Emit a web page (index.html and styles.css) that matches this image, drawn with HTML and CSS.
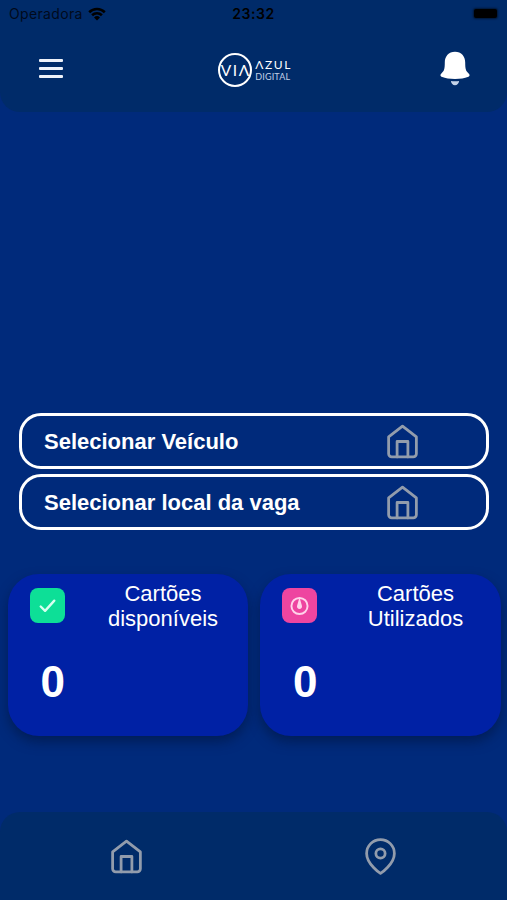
FILE: index.html
```
<!DOCTYPE html>
<html lang="pt-BR">
<head>
  <meta charset="UTF-8" />
  <meta name="viewport" content="width=device-width, initial-scale=1.0"/>
  <title>Via Azul Digital</title>
  <link rel="stylesheet" href="styles.css">
</head>
<body>

  <header class="header">
    <!-- Status bar -->
    <div class="status-bar">
      <div class="carrier">
        <span>Operadora</span>
        <svg class="wifi" viewBox="0 0 18 14">
          <path d="M1.2 5.2a11.2 11.2 0 0 1 15.6 0M4.1 8.3a7 7 0 0 1 9.8 0" fill="none" stroke="#000" stroke-width="2.6"/>
          <path d="M9 13.6L6 10.5a4.3 4.3 0 0 1 6 0z" fill="#000"/>
        </svg>
      </div>
      <div class="clock">23:32</div>
      <div class="battery"></div>
    </div>

    <!-- Menu, logo, notifications -->
    <div class="nav">
      <button class="nav-btn menu-btn" aria-label="Menu">
        <span></span><span></span><span></span>
      </button>
      <div class="logo">
        <div class="logo-circle">VIΛ</div>
        <div class="logo-text">
          <span class="logo-azul">ΛZUL</span>
          <span class="logo-digital">DIGITAL</span>
        </div>
      </div>
      <button class="nav-btn bell-btn" aria-label="Notificações">
        <svg class="bell" viewBox="0 0 30 35">
          <path d="M15 .8c6.4 0 10.2 4.7 10.2 10.8 0 6.8.8 8.6 3.2 10.6 2 1.8 1.2 3.2-.6 3.9-3 1.2-7.4 1.9-12.8 1.9s-9.8-.7-12.8-1.9c-1.8-.7-2.6-2.1-.6-3.9 2.4-2 3.2-3.8 3.2-10.6C4.8 5.5 8.6.8 15 .8z" fill="#fff"/>
          <path d="M10.9 30q4.1.6 8.2 0c-.3 2.6-1.9 4.2-4.1 4.200s-3.800-1.600-4.100-4.200z" fill="#c5d3e8"/>
        </svg>
      </button>
    </div>
  </header>

  <main class="content">
    <div class="selects">
      <div class="select-box">
        <span>Selecionar Veículo</span>
        <svg class="icon" viewBox="0 0 24 24">
          <path d="M3 9l9-7 9 7v11a2 2 0 0 1-2 2H5a2 2 0 0 1-2-2z"/>
          <path d="M8.500 22V12h7v10"/>
        </svg>
      </div>
      <div class="select-box">
        <span>Selecionar local da vaga</span>
        <svg class="icon" viewBox="0 0 24 24">
          <path d="M3 9l9-7 9 7v11a2 2 0 0 1-2 2H5a2 2 0 0 1-2-2z"/>
          <path d="M8.500 22V12h7v10"/>
        </svg>
      </div>
    </div>

    <div class="cards">
      <div class="card">
        <div class="card-top">
          <div class="badge green">
            <svg viewBox="0 0 36 36">
              <path d="M11 19l4.500 4.500L25 13" fill="none" stroke="#d8fff0" stroke-width="2.400" stroke-linecap="round" stroke-linejoin="round"/>
            </svg>
          </div>
          <div class="card-title">Cartões disponíveis</div>
        </div>
        <div class="card-value">0</div>
      </div>
      <div class="card">
        <div class="card-top">
          <div class="badge pink">
            <svg viewBox="0 0 36 36">
              <circle cx="18" cy="18.500" r="8.300" fill="none" stroke="#ffd3ea" stroke-width="2"/>
              <path d="M18 9.500l2.500 8.800a2.600 2.600 0 1 1-5 0z" fill="#ffd3ea"/>
            </svg>
          </div>
          <div class="card-title">Cartões Utilizados</div>
        </div>
        <div class="card-value">0</div>
      </div>
    </div>
  </main>

  <!-- Bottom tabs -->
  <footer class="tabs">
    <div class="tab">
      <svg class="icon" viewBox="0 0 24 24">
        <path d="M3 9l9-7 9 7v11a2 2 0 0 1-2 2H5a2 2 0 0 1-2-2z"/>
        <path d="M8.500 22V12h7v10"/>
      </svg>
    </div>
    <div class="tab">
      <svg class="icon" viewBox="0 0 24 24">
        <path d="M21 10c0 7-9 13-9 13s-9-6-9-13a9 9 0 0 1 18 0z"/>
        <circle cx="12" cy="10" r="3"/>
      </svg>
    </div>
  </footer>

</body>
</html>
```
FILE: styles.css
```
* {
  box-sizing: border-box;
}

body {
  margin: 0;
  height: 100vh;
  display: flex;
  flex-direction: column;
  background: #002a7b;
  color: #fff;
  font-family: "Liberation Sans", Arial, sans-serif;
  overflow: hidden;
}

.header {
  height: 112px;
  background: #002b69;
  border-radius: 0 0 20px 20px;
}

.status-bar {
  display: grid;
  grid-template-columns: 1fr auto 1fr;
  align-items: center;
  height: 27px;
  padding: 0 10px 0 9px;
  color: #000;
  font-family: Inter, sans-serif;
  font-size: 14px;
}

.carrier {
  display: flex;
  align-items: center;
  gap: 5px;
  letter-spacing: 0.35px;
  color: #000a1c;
}

.wifi {
  width: 18px;
  height: 14px;
}

.clock {
  padding-left: 1px;
  font-weight: 600;
  letter-spacing: 0.6px;
}

.battery {
  justify-self: end;
  width: 23px;
  height: 9px;
  border-radius: 2px;
  background: #000;
  box-shadow: 0 0 2px 1px rgba(0, 0, 0, 0.5);
}

.nav {
  display: flex;
  justify-content: space-between;
  align-items: center;
  height: 84px;
  padding: 0 37.5px 0 39px;
}

.nav-btn {
  padding: 0;
  border: none;
  background: none;
}

.menu-btn {
  display: flex;
  flex-direction: column;
  gap: 5px;
  width: 24px;
  padding-bottom: 1px;
}

.menu-btn span {
  height: 3px;
  border-radius: 1px;
  background: #eef2fa;
}

.bell-btn {
  display: flex;
  padding-bottom: 2px;
}

.bell {
  width: 30px;
  height: 35px;
}

.logo {
  display: flex;
  align-items: center;
  gap: 3px;
  padding: 2px 0 0 7px;
}

.logo-circle {
  display: flex;
  justify-content: center;
  align-items: center;
  width: 34px;
  height: 34px;
  padding-left: 1px;
  border: 2px solid #fff;
  border-radius: 50%;
  font-family: Lato, sans-serif;
  font-size: 15.5px;
  letter-spacing: 1.5px;
}

.logo-text {
  display: flex;
  flex-direction: column;
  width: 36px;
  padding-bottom: 1px;
  font-family: Lato, sans-serif;
  white-space: nowrap;
}

.logo-azul {
  font-size: 12px;
  line-height: 13px;
  letter-spacing: 1.6px;
}

.logo-digital {
  font-size: 9px;
  line-height: 11px;
  letter-spacing: 0.15px;
  color: #c3d0e6;
}

.content {
  flex: 1;
  display: flex;
  flex-direction: column;
  justify-content: flex-end;
  padding: 0 6.5px 76px 7.5px;
}

.selects {
  display: flex;
  flex-direction: column;
  gap: 5px;
  padding: 0 11.5px;
}

.select-box {
  display: flex;
  justify-content: space-between;
  align-items: center;
  height: 56px;
  padding: 1px 65px 0 22px;
  border: 3.5px solid #fff;
  border-radius: 22px;
  font-size: 22px;
  font-weight: bold;
}

.icon {
  width: 37px;
  height: 37px;
  fill: none;
  stroke: #929cac;
  stroke-width: 1.8;
  stroke-linecap: round;
  stroke-linejoin: round;
}

.cards {
  display: flex;
  gap: 12px;
  margin-top: 44px;
}

.card {
  flex: 1;
  height: 162px;
  padding: 7px 20px 0 22px;
  border-radius: 31px;
  background: #0021a5;
  box-shadow: 0 6px 12px rgba(0, 20, 60, 0.55);
}

.card-top {
  display: flex;
  justify-content: space-between;
}

.badge {
  width: 35px;
  height: 35px;
  margin-top: 7px;
  border-radius: 8px;
}

.badge svg {
  display: block;
}

.green {
  background: #0ddf97;
}

.pink {
  background: #ee45a0;
}

.card-title {
  width: 130px;
  font-size: 22px;
  line-height: 25px;
  text-align: center;
}

.card-value {
  margin: 26px 0 0 11px;
  font-size: 44px;
  line-height: 50px;
  font-weight: bold;
}

.tabs {
  display: flex;
  height: 88px;
  background: #002b69;
  border-radius: 20px 20px 0 0;
}

.tab {
  flex: 1;
  display: flex;
  justify-content: center;
  align-items: center;
}
```
